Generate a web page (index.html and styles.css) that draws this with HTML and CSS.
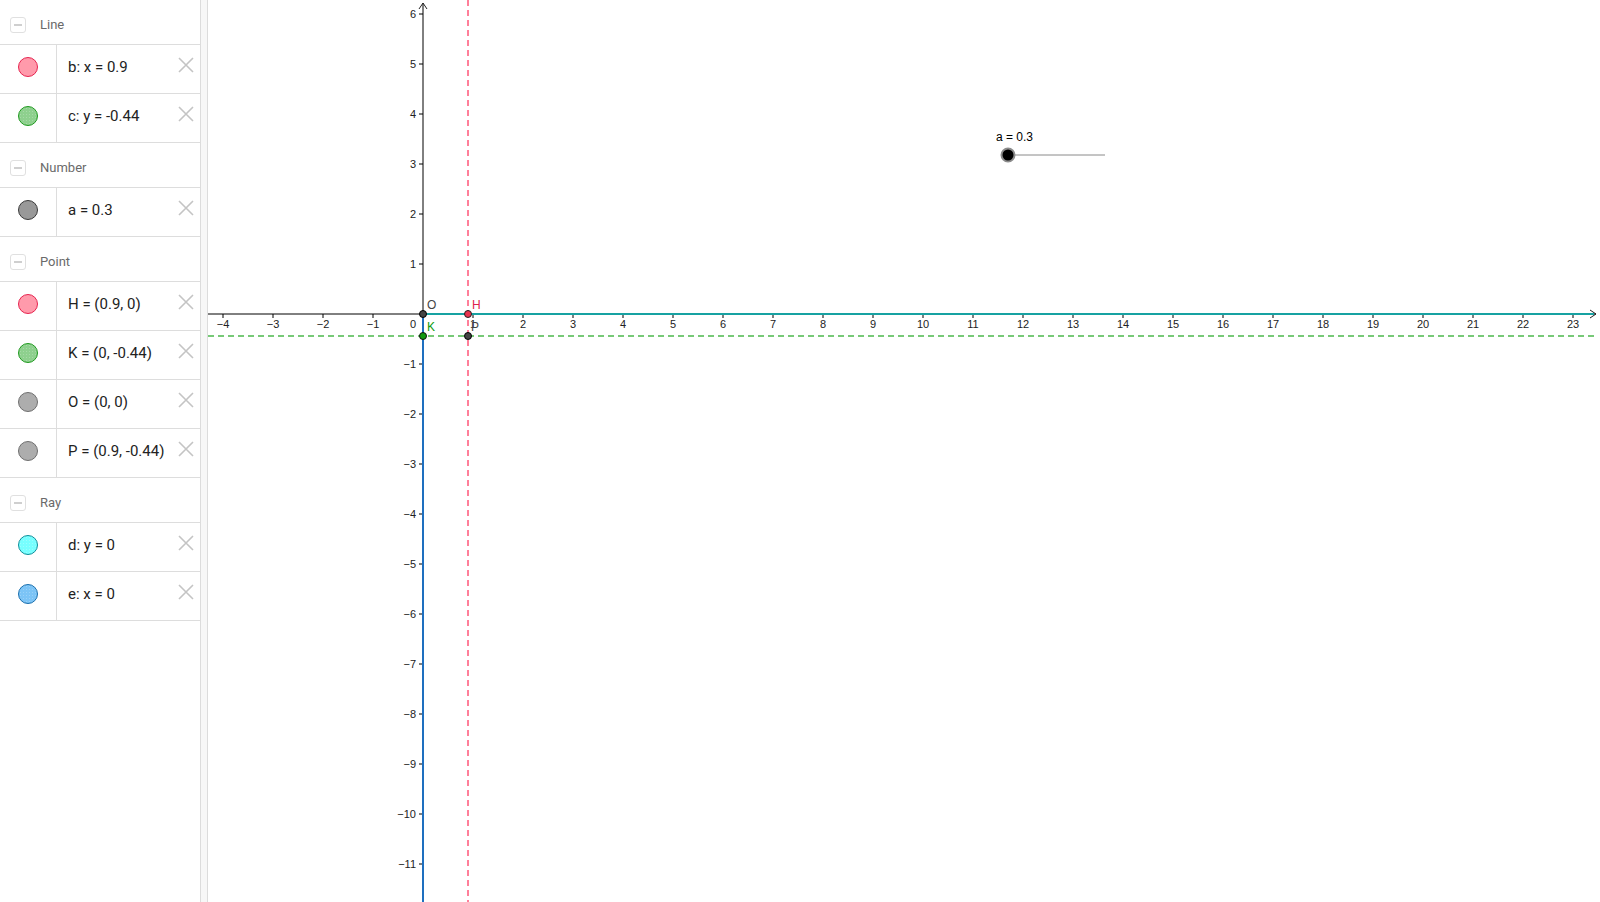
FILE: index.html
```html
<!DOCTYPE html>
<html>
<head>
<meta charset="utf-8">
<link rel="stylesheet" href="styles.css">
</head>
<body>
<div class="app">
  <aside class="algebra">
    <div class="group"><span class="toggle"></span><span class="group-name">Line</span></div>
    <div class="item"><span class="marble-cell"><span class="marble red"></span></span><span class="expr">b: x = 0.9</span><svg class="del" viewBox="0 0 16 16"><path d="M1 1L15 15M15 1L1 15"/></svg></div>
    <div class="item"><span class="marble-cell"><span class="marble green"></span></span><span class="expr">c: y = -0.44</span><svg class="del" viewBox="0 0 16 16"><path d="M1 1L15 15M15 1L1 15"/></svg></div>
    <div class="group"><span class="toggle"></span><span class="group-name">Number</span></div>
    <div class="item"><span class="marble-cell"><span class="marble dark"></span></span><span class="expr">a = 0.3</span><svg class="del" viewBox="0 0 16 16"><path d="M1 1L15 15M15 1L1 15"/></svg></div>
    <div class="group"><span class="toggle"></span><span class="group-name">Point</span></div>
    <div class="item"><span class="marble-cell"><span class="marble red"></span></span><span class="expr">H = (0.9, 0)</span><svg class="del" viewBox="0 0 16 16"><path d="M1 1L15 15M15 1L1 15"/></svg></div>
    <div class="item"><span class="marble-cell"><span class="marble green"></span></span><span class="expr">K = (0, -0.44)</span><svg class="del" viewBox="0 0 16 16"><path d="M1 1L15 15M15 1L1 15"/></svg></div>
    <div class="item"><span class="marble-cell"><span class="marble grey"></span></span><span class="expr">O = (0, 0)</span><svg class="del" viewBox="0 0 16 16"><path d="M1 1L15 15M15 1L1 15"/></svg></div>
    <div class="item"><span class="marble-cell"><span class="marble grey"></span></span><span class="expr">P = (0.9, -0.44)</span><svg class="del" viewBox="0 0 16 16"><path d="M1 1L15 15M15 1L1 15"/></svg></div>
    <div class="group"><span class="toggle"></span><span class="group-name">Ray</span></div>
    <div class="item"><span class="marble-cell"><span class="marble cyan"></span></span><span class="expr">d: y = 0</span><svg class="del" viewBox="0 0 16 16"><path d="M1 1L15 15M15 1L1 15"/></svg></div>
    <div class="item"><span class="marble-cell"><span class="marble blue"></span></span><span class="expr">e: x = 0</span><svg class="del" viewBox="0 0 16 16"><path d="M1 1L15 15M15 1L1 15"/></svg></div>
  </aside>
  <div class="splitter"></div>
  <main class="graphics">
    <svg class="plot" width="1392" height="902" viewBox="0 0 1392 902">
      <line x1="0" y1="314" x2="1388" y2="314" stroke="#000" stroke-width="1"/>
      <polyline points="1382,310 1388,314 1382,318" fill="none" stroke="#222" stroke-width="1"/>
      <line x1="215" y1="3" x2="215" y2="902" stroke="#000" stroke-width="1"/>
      <polyline points="211,9 215,3 219,9" fill="none" stroke="#222" stroke-width="1"/>
      <g stroke="#000" stroke-width="1">
        <line x1="15" y1="314" x2="15" y2="318"/><line x1="65" y1="314" x2="65" y2="318"/><line x1="115" y1="314" x2="115" y2="318"/><line x1="165" y1="314" x2="165" y2="318"/>
        <line x1="265" y1="314" x2="265" y2="318"/><line x1="315" y1="314" x2="315" y2="318"/><line x1="365" y1="314" x2="365" y2="318"/><line x1="415" y1="314" x2="415" y2="318"/>
        <line x1="465" y1="314" x2="465" y2="318"/><line x1="515" y1="314" x2="515" y2="318"/><line x1="565" y1="314" x2="565" y2="318"/><line x1="615" y1="314" x2="615" y2="318"/>
        <line x1="665" y1="314" x2="665" y2="318"/><line x1="715" y1="314" x2="715" y2="318"/><line x1="765" y1="314" x2="765" y2="318"/><line x1="815" y1="314" x2="815" y2="318"/>
        <line x1="865" y1="314" x2="865" y2="318"/><line x1="915" y1="314" x2="915" y2="318"/><line x1="965" y1="314" x2="965" y2="318"/><line x1="1015" y1="314" x2="1015" y2="318"/>
        <line x1="1065" y1="314" x2="1065" y2="318"/><line x1="1115" y1="314" x2="1115" y2="318"/><line x1="1165" y1="314" x2="1165" y2="318"/><line x1="1215" y1="314" x2="1215" y2="318"/>
        <line x1="1265" y1="314" x2="1265" y2="318"/><line x1="1315" y1="314" x2="1315" y2="318"/><line x1="1365" y1="314" x2="1365" y2="318"/>
      </g>
      <g stroke="#000" stroke-width="1">
        <line x1="211" y1="14" x2="215" y2="14"/><line x1="211" y1="64" x2="215" y2="64"/><line x1="211" y1="114" x2="215" y2="114"/><line x1="211" y1="164" x2="215" y2="164"/>
        <line x1="211" y1="214" x2="215" y2="214"/><line x1="211" y1="264" x2="215" y2="264"/><line x1="211" y1="364" x2="215" y2="364"/><line x1="211" y1="414" x2="215" y2="414"/>
        <line x1="211" y1="464" x2="215" y2="464"/><line x1="211" y1="514" x2="215" y2="514"/><line x1="211" y1="564" x2="215" y2="564"/><line x1="211" y1="614" x2="215" y2="614"/>
        <line x1="211" y1="664" x2="215" y2="664"/><line x1="211" y1="714" x2="215" y2="714"/><line x1="211" y1="764" x2="215" y2="764"/><line x1="211" y1="814" x2="215" y2="814"/>
        <line x1="211" y1="864" x2="215" y2="864"/>
      </g>
      <g class="tick-label" text-anchor="middle">
        <text x="15" y="328">−4</text><text x="65" y="328">−3</text><text x="115" y="328">−2</text><text x="165" y="328">−1</text>
        <text x="205" y="328">0</text>
        <text x="265" y="328">1</text><text x="315" y="328">2</text><text x="365" y="328">3</text><text x="415" y="328">4</text>
        <text x="465" y="328">5</text><text x="515" y="328">6</text><text x="565" y="328">7</text><text x="615" y="328">8</text>
        <text x="665" y="328">9</text><text x="715" y="328">10</text><text x="765" y="328">11</text><text x="815" y="328">12</text>
        <text x="865" y="328">13</text><text x="915" y="328">14</text><text x="965" y="328">15</text><text x="1015" y="328">16</text>
        <text x="1065" y="328">17</text><text x="1115" y="328">18</text><text x="1165" y="328">19</text><text x="1215" y="328">20</text>
        <text x="1265" y="328">21</text><text x="1315" y="328">22</text><text x="1365" y="328">23</text>
      </g>
      <g class="tick-label" text-anchor="end">
        <text x="208" y="18">6</text><text x="208" y="68">5</text><text x="208" y="118">4</text><text x="208" y="168">3</text>
        <text x="208" y="218">2</text><text x="208" y="268">1</text>
        <text x="208" y="368">−1</text><text x="208" y="418">−2</text><text x="208" y="468">−3</text><text x="208" y="518">−4</text>
        <text x="208" y="568">−5</text><text x="208" y="618">−6</text><text x="208" y="668">−7</text><text x="208" y="718">−8</text>
        <text x="208" y="768">−9</text><text x="208" y="818">−10</text><text x="208" y="868">−11</text>
      </g>
      <line x1="215" y1="314" x2="1386" y2="314" stroke="#17a2a2" stroke-width="2"/>
      <line x1="215" y1="314" x2="215" y2="902" stroke="#1e6fbf" stroke-width="2"/>
      <line x1="260" y1="0" x2="260" y2="902" stroke="#ff7f9a" stroke-width="2" stroke-dasharray="6 4"/>
      <line x1="0" y1="336" x2="1388" y2="336" stroke="#77c977" stroke-width="2" stroke-dasharray="6 4"/>
      <circle cx="215" cy="314" r="3.5" fill="#444" stroke="#000" stroke-width="1"/>
      <circle cx="260" cy="314" r="3.5" fill="#e8334f" stroke="#222" stroke-width="1"/>
      <circle cx="215" cy="336" r="3.5" fill="#119a11" stroke="#111" stroke-width="1"/>
      <circle cx="260" cy="336" r="3.5" fill="#444" stroke="#000" stroke-width="1"/>
      <text class="pt-label" x="219" y="309" fill="#444">O</text>
      <text class="pt-label" x="264" y="309" fill="#e0224d">H</text>
      <text class="pt-label" x="219" y="331" fill="#0a9a0a">K</text>
      <text class="pt-label" x="263" y="331" fill="#444">P</text>
      <text class="slider-label" x="788" y="141">a = 0.3</text>
      <line x1="800" y1="155" x2="897" y2="155" stroke="#8a8a8a" stroke-width="1"/>
      <circle cx="800" cy="155" r="6.5" fill="#000" stroke="#8c8c8c" stroke-width="2"/>
    </svg>
  </main>
</div>
</body>
</html>
```

FILE: styles.css
```css
html, body {
  margin: 0;
  padding: 0;
  width: 1600px;
  height: 902px;
  overflow: hidden;
  background: #fff;
}

.app {
  display: flex;
  width: 1600px;
  height: 902px;
}

.algebra {
  width: 200px;
  flex: none;
  display: flex;
  flex-direction: column;
  background: #fff;
  font-family: Roboto, "Liberation Sans", sans-serif;
}

.group {
  border-bottom: 1px solid #dddddd;
  display: flex;
  align-items: center;
  padding-top: 5px;
  box-sizing: content-box;
  height: 39px;
}

.toggle {
  width: 14px;
  height: 14px;
  border: 1px solid #e0e0e0;
  border-radius: 3px;
  margin-left: 10px;
  margin-right: 14px;
  position: relative;
  flex: none;
}

.toggle::after {
  content: "";
  position: absolute;
  left: 3px;
  right: 3px;
  top: 6px;
  height: 2px;
  background: #cfcfcf;
}

.group-name {
  font-size: 13px;
  color: #6a6a6a;
}

.item {
  height: 44px;
  padding-bottom: 4px;
  border-bottom: 1px solid #dddddd;
  display: flex;
  align-items: stretch;
}

.marble-cell {
  width: 56px;
  flex: none;
  border-right: 1px solid #dddddd;
  display: flex;
  align-items: center;
  justify-content: center;
  margin-bottom: -4px;
  padding-bottom: 4px;
}

.marble {
  width: 18px;
  height: 18px;
  border-radius: 50%;
  border: 1px solid #444;
  box-sizing: content-box;
}

.marble.red { background: #ff9aab; border-color: #e6244f; }
.marble.green {
  background: radial-gradient(circle, rgba(255,255,255,0.22) 0.5px, transparent 0.9px) 0 0 / 3px 3px, #8ed08e;
  border-color: #1f9a1f;
}
.marble.dark { background: #999999; border-color: #3a3a3a; }
.marble.grey { background: #adadad; border-color: #6f6f6f; }
.marble.cyan {
  background: radial-gradient(circle, rgba(255,255,255,0.25) 0.5px, transparent 0.9px) 0 0 / 3px 3px, #77ffff;
  border-color: #0e8f9a;
}
.marble.blue {
  background: radial-gradient(circle, rgba(255,255,255,0.22) 0.5px, transparent 0.9px) 0 0 / 3px 3px, #7cc4f6;
  border-color: #1a6fae;
}

.expr {
  flex: 1;
  display: flex;
  align-items: center;
  padding-left: 11px;
  font-size: 15px;
  color: #222;
  white-space: nowrap;
}

.del {
  width: 16px;
  height: 16px;
  flex: none;
  align-self: center;
  margin-right: 6px;
  margin-top: -5px;
  fill: none;
  stroke: #c4c4c4;
  stroke-width: 1.6;
}

.splitter {
  width: 6px;
  flex: none;
  background: #f7f7f7;
  border-left: 1px solid #dcdcdc;
  border-right: 1px solid #dcdcdc;
}

.graphics {
  flex: 1;
  position: relative;
  overflow: hidden;
}

.plot {
  display: block;
}

.tick-label {
  font-family: "Liberation Sans", Arial, sans-serif;
  font-size: 11px;
  fill: #222;
}

.pt-label {
  font-family: "Liberation Sans", Arial, sans-serif;
  font-size: 12px;
}

.slider-label {
  font-family: "Liberation Sans", Arial, sans-serif;
  font-size: 12px;
  fill: #000;
}
```
